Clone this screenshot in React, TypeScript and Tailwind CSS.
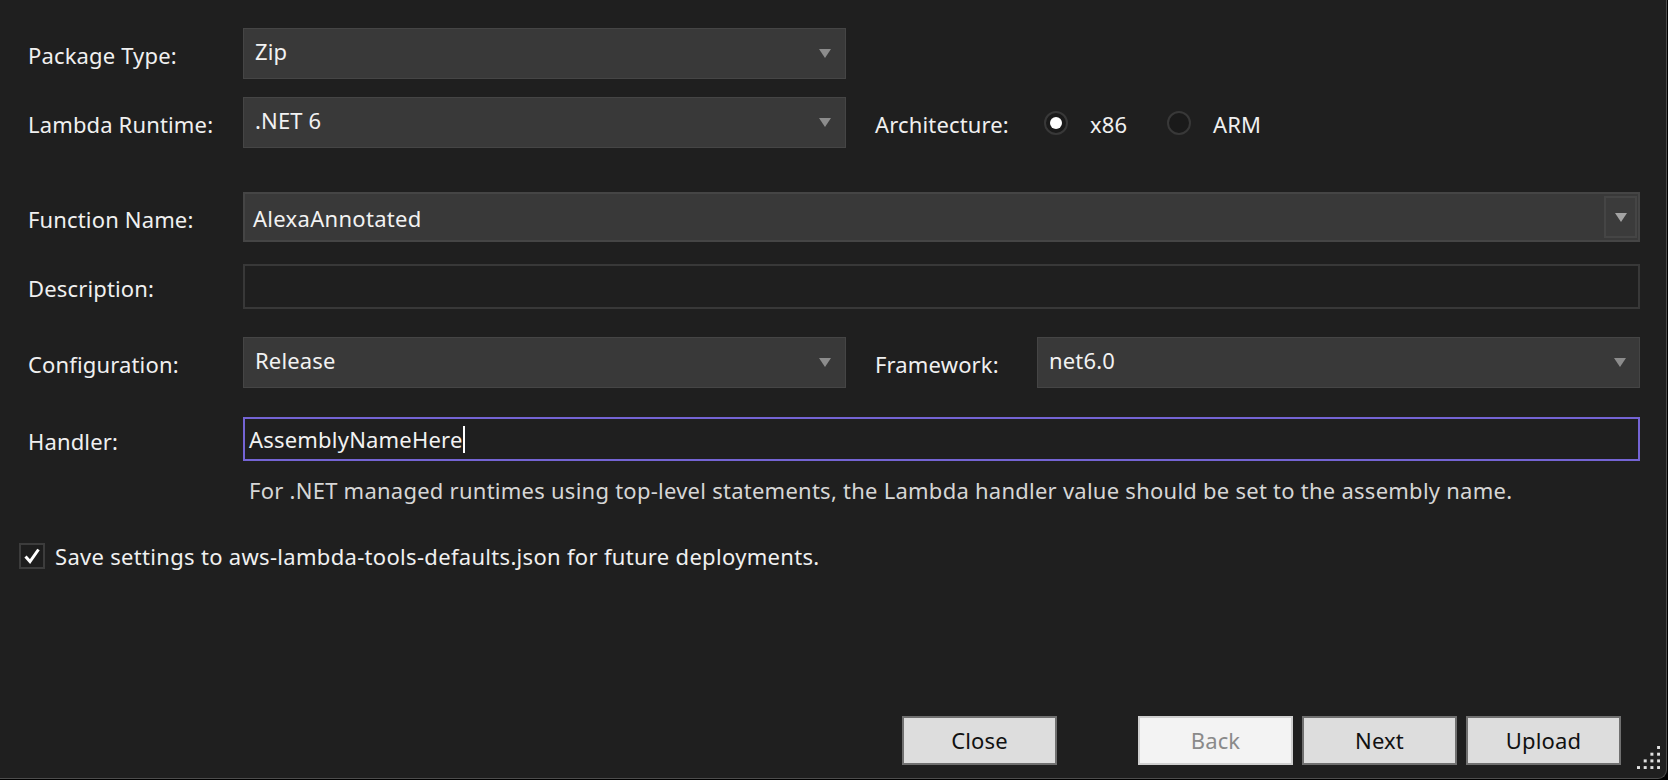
import React from "react";

const FONT = { fontFamily: '"Noto Sans", "Open Sans", sans-serif', letterSpacing: "0.15px" };

function Arrow({ color = "#8c8c8c" }: { color?: string }) {
  return (
    <svg width="12" height="9" viewBox="0 0 12 9" className="shrink-0">
      <polygon points="0,0 12,0 6,9" fill={color} />
    </svg>
  );
}

function Select({ value, width }: { value: string; width: string }) {
  return (
    <div
      className={`${width} h-[51px] bg-[#393939] border-[1.5px] border-[#454545] flex items-center justify-between pl-[11px] pr-[14px] shrink-0`}
    >
      <span className="text-[22px] text-[#f2f2f2] leading-none -mt-[5px]">{value}</span>
      <Arrow />
    </div>
  );
}

function Label({ children }: { children: React.ReactNode }) {
  return <div className="w-[215px] shrink-0 text-[22px] text-[#f0f0f0] leading-none pt-[3px]">{children}</div>;
}

function Radio({ checked, label, width }: { checked: boolean; label: string; width: string }) {
  return (
    <div className={`flex items-center ${width}`}>
      <div className="w-[24px] h-[24px] rounded-full border-2 border-[#383838] bg-[#1a1a1a] flex items-center justify-center">
        {checked && <div className="w-[12px] h-[12px] rounded-full bg-white" />}
      </div>
      <span className="ml-[22px] text-[22px] text-[#f0f0f0] leading-none pt-[2px]">{label}</span>
    </div>
  );
}

function Btn({ label, disabled }: { label: string; disabled?: boolean }) {
  return (
    <div
      className={`w-[155px] h-[49px] flex items-center justify-center text-[22px] leading-none border-2 ${
        disabled ? "bg-[#f3f3f3] border-[#cfcfcf] text-[#8a8a8a]" : "bg-[#dddddd] border-[#707070] text-[#111]"
      }`}
    >
      <span className="-mt-[1px]">{label}</span>
    </div>
  );
}

export default function App() {
  return (
    <div className="w-[1668px] h-[780px] bg-black" style={FONT}>
      <div className="relative w-[1667px] h-[779px] bg-[#1f1f1f] border-r border-b border-[#4d4d4d] rounded-br-[9px] flex flex-col">
        {/* Row 1 */}
        <div className="flex items-center ml-[28px] mt-[28px]">
          <Label>Package Type:</Label>
          <Select value="Zip" width="w-[603px]" />
        </div>
        {/* Row 2 */}
        <div className="flex items-center ml-[28px] mt-[18px]">
          <Label>Lambda Runtime:</Label>
          <Select value=".NET 6" width="w-[603px]" />
          <div className="ml-[29px] text-[22px] text-[#f0f0f0] leading-none pt-[3px] w-[169px]">Architecture:</div>
          <Radio checked label="x86" width="w-[123px]" />
          <Radio checked={false} label="ARM" width="w-[160px]" />
        </div>
        {/* Row 3 */}
        <div className="flex items-center ml-[28px] mt-[44px] mr-[26px]">
          <Label>Function Name:</Label>
          <div className="flex-1 h-[50px] bg-[#393939] border-2 border-[#454545] flex items-stretch">
            <div className="flex-1 flex items-center pl-[8px]">
              <span className="text-[22px] text-[#f2f2f2] leading-none mt-[1px]" style={{ letterSpacing: "0.3px" }}>
                AlexaAnnotated
              </span>
            </div>
            <div className="w-[33px] my-[2px] mr-[1px] border-2 border-[#454545] bg-[#3b3b3b] flex items-center justify-center">
              <Arrow color="#a3a3a3" />
            </div>
          </div>
        </div>
        {/* Row 4 */}
        <div className="flex items-center ml-[28px] mt-[22px] mr-[26px]">
          <Label>Description:</Label>
          <div className="flex-1 h-[45px] border-2 border-[#383838]" />
        </div>
        {/* Row 5 */}
        <div className="flex items-center ml-[28px] mt-[28px] mr-[26px]">
          <Label>Configuration:</Label>
          <Select value="Release" width="w-[603px]" />
          <div className="ml-[29px] text-[22px] text-[#f0f0f0] leading-none pt-[3px] w-[162px]">Framework:</div>
          <div className="flex-1 h-[51px] bg-[#393939] border-[1.5px] border-[#454545] flex items-center justify-between pl-[11px] pr-[13px]">
            <span className="text-[22px] text-[#f2f2f2] leading-none -mt-[5px]">net6.0</span>
            <Arrow />
          </div>
        </div>
        {/* Row 6 */}
        <div className="flex items-center ml-[28px] mt-[29px] mr-[26px]">
          <Label>Handler:</Label>
          <div className="flex-1 h-[44px] border-2 border-[#7464d4] flex items-center pl-[4px]">
            <span className="text-[22px] text-[#f2f2f2] leading-none" style={{ letterSpacing: "0.2px" }}>
              AssemblyNameHere
            </span>
            <div className="w-[2px] h-[27px] bg-white" />
          </div>
        </div>
        {/* Help text */}
        <div className="ml-[249px] mt-[18px] text-[22px] text-[#d6d6d6] leading-none" style={{ letterSpacing: "0.25px" }}>
          For .NET managed runtimes using top-level statements, the Lambda handler value should be set to the assembly name.
        </div>
        {/* Checkbox */}
        <div className="flex items-center ml-[19px] mt-[42px]">
          <div className="w-[26px] h-[26px] border-2 border-[#3c3c3c] bg-[#1d1d1d] flex items-center justify-center">
            <svg width="18" height="18" viewBox="0 0 18 18">
              <path d="M2.5 9.5 L7 14.5 L15.5 2.5" stroke="white" strokeWidth="3" fill="none" strokeLinejoin="miter" />
            </svg>
          </div>
          <span className="ml-[10px] text-[22px] text-[#f0f0f0] leading-none" style={{ letterSpacing: "0.31px" }}>
            Save settings to aws-lambda-tools-defaults.json for future deployments.
          </span>
        </div>
        {/* Buttons */}
        <div className="mt-auto mb-[13px] flex justify-end mr-[45px]">
          <Btn label="Close" />
          <div className="w-[81px]" />
          <Btn label="Back" disabled />
          <div className="w-[9px]" />
          <Btn label="Next" />
          <div className="w-[9px]" />
          <Btn label="Upload" />
        </div>
        {/* Resize grip */}
        <svg className="absolute right-[6px] bottom-[9px]" width="24" height="24" viewBox="0 0 24 24">
          {[
            [3, 0],
            [2, 1],
            [3, 1],
            [1, 2],
            [2, 2],
            [3, 2],
            [0, 3],
            [1, 3],
            [2, 3],
            [3, 3],
          ].map(([c, r], i) => (
            <rect key={i} x={c * 6.7 + 1} y={r * 6.7 + 1} width="3" height="3" fill="#e0e0e0" />
          ))}
        </svg>
      </div>
    </div>
  );
}
